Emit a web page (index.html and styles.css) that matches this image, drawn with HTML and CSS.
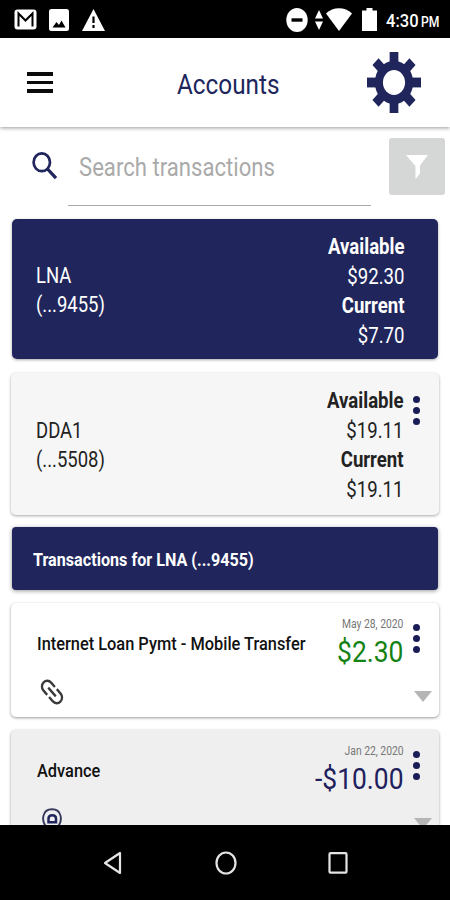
FILE: index.html
```html
<!DOCTYPE html>
<html lang="en">

<head>
  <meta charset="UTF-8">
  <meta name="viewport" content="width=device-width, initial-scale=1.0">
  <title>Accounts</title>

  <link rel="stylesheet" href="styles.css">
</head>

<body>
  <div class="status-bar">
    <svg class="icon-mail" width="23" height="21" viewBox="0 0 23 21">
      <rect x=".5" y=".5" width="22" height="20" rx="3" fill="#fff" />
      <path d="M4.500 17.500V4.500L11.500 11.500L18.500 4.500V17.500" fill="none" stroke="#000" stroke-width="2" />
    </svg>
    <svg class="icon-photo" width="20" height="22" viewBox="0 0 20 22">
      <rect width="20" height="22" rx="2.500" fill="#fff" />
      <path d="M3.500 18.500L7.500 13L10 16L12.500 11.500L16.500 18.500Z" fill="#000" />
    </svg>
    <svg class="icon-warning" width="23" height="22" viewBox="0 0 23 22">
      <path d="M11.500 0L23 22H0Z" fill="#fff" />
      <path d="M11.500 7.500V14M11.500 16V19" stroke="#000" stroke-width="2.200" />
    </svg>
    <svg class="icon-dnd" width="22" height="24" viewBox="0 0 22 24">
      <ellipse cx="11" cy="12" rx="10.700" ry="12" fill="#fff" />
      <path d="M5.500 12H16.500" stroke="#000" stroke-width="3.400" />
    </svg>
    <svg class="icon-data" width="8" height="20" viewBox="0 0 8 20">
      <path d="M4 0L8 8.500H0ZM4 20L8 11.500H0Z" fill="#fff" />
    </svg>
    <svg class="icon-wifi" width="26" height="23" viewBox="0 0 26 23">
      <path d="M0 5.500C7-1.500 19-1.500 26 5.500L13 23Z" fill="#fff" />
    </svg>
    <svg class="icon-battery" width="15" height="23" viewBox="0 0 15 23">
      <path d="M4.500 0H10.500V2.500H15V23H0V2.500H4.500Z" fill="#fff" />
    </svg>
    <div class="clock"><span class="clock-time">4:30</span><span class="clock-pm">PM</span></div>
  </div>

  <header class="header">
    <div class="menu">
      <i></i><i></i><i></i>
    </div>
    <h1 class="title">Accounts</h1>
    <svg class="gear" width="54" height="61" viewBox="-31 -31 62 62" preserveAspectRatio="none">
      <g fill="#20265c">
        <rect x="-5" y="-31" width="10" height="62" />
        <rect x="-31" y="-5" width="62" height="10" />
        <rect x="-5" y="-30" width="10" height="60" transform="rotate(45)" />
        <rect x="-5" y="-30" width="10" height="60" transform="rotate(-45)" />
        <circle r="22" />
      </g>
      <circle r="12.700" fill="#fff" />
    </svg>
  </header>

  <main class="content">
    <div class="search">
      <svg class="icon-search" width="26" height="28" viewBox="0 0 26 28">
        <ellipse cx="9.800" cy="10.300" rx="8.200" ry="8.900" fill="none" stroke="#20265c" stroke-width="2.700" />
        <path d="M15.500 17L24 26.200" stroke="#20265c" stroke-width="3.300" />
      </svg>
      <div class="search-field"><span class="placeholder">Search transactions</span></div>
      <div class="filter">
        <svg width="22" height="24" viewBox="0 0 22 24">
          <path d="M0 0H22L14 10.500V18.500L9.500 24V11Z" fill="#fff" />
        </svg>
      </div>
    </div>

    <section class="account selected">
      <div class="account-name"><span>LNA</span><span>(...9455)</span></div>
      <div class="account-balance">
        <b>Available</b><span>$92.30</span><b>Current</b><span>$7.70</span>
      </div>
    </section>

    <section class="account">
      <div class="account-name"><span>DDA1</span><span>(...5508)</span></div>
      <div class="account-balance">
        <b>Available</b><span>$19.11</span><b>Current</b><span>$19.11</span>
      </div>
      <div class="dots"><i></i><i></i><i></i></div>
    </section>

    <div class="list-title"><span>Transactions for LNA (...9455)</span></div>

    <section class="transaction">
      <div class="desc">
        <span class="desc-text">Internet Loan Pymt - Mobile Transfer</span>
        <svg class="icon-link" width="26" height="28" viewBox="0 0 26 28">
          <g transform="translate(13 14) scale(.93 1) rotate(47)" fill="none" stroke="#3a3a3a" stroke-width="2.500">
            <path d="M-1.500 -5.700H-7.500A5.700 5.700 0 0 0 -7.500 5.700H-1.500M1.500 -5.700H7.500A5.700 5.700 0 0 1 7.500 5.700H1.500M-6 0H6" />
          </g>
        </svg>
      </div>
      <div class="amount">
        <span class="date">May 28, 2020</span>
        <span class="value credit">$2.30</span>
      </div>
      <div class="dots"><i></i><i></i><i></i></div>
      <i class="expand"></i>
    </section>

    <section class="transaction alt">
      <div class="desc">
        <span class="desc-text">Advance</span>
        <svg class="icon-pin" width="20" height="24" viewBox="0 0 20 24">
          <path d="M4.500 19C-1 13 0 1.200 10 1.200S21 13 15.500 19" fill="none" stroke="#35385c" stroke-width="1.900" />
          <path d="M6.500 14.300V10.500C6.500 6 14 6 14 10.500V14.300Z" fill="none" stroke="#20265c" stroke-width="2.500" />
        </svg>
      </div>
      <div class="amount">
        <span class="date">Jan 22, 2020</span>
        <span class="value">-$10.00</span>
      </div>
      <div class="dots"><i></i><i></i><i></i></div>
      <i class="expand"></i>
    </section>
  </main>

  <nav class="nav-bar">
    <svg width="20" height="24" viewBox="0 0 20 24">
      <path d="M17 2V22L2 12Z" fill="none" stroke="#e4e4e4" stroke-width="2.200" stroke-linejoin="round" />
    </svg>
    <svg width="22" height="24" viewBox="0 0 22 24">
      <ellipse cx="11" cy="12" rx="9.500" ry="10.500" fill="none" stroke="#e4e4e4" stroke-width="2.200" />
    </svg>
    <svg width="20" height="24" viewBox="0 0 20 24">
      <rect x="1.500" y="2.200" width="17" height="19.500" rx="1" fill="none" stroke="#e4e4e4" stroke-width="2.200" />
    </svg>
  </nav>
</body>

</html>
```

FILE: styles.css
```css
* {
  box-sizing: border-box;
}

body {
  margin: 0;
  width: 450px;
  height: 900px;
  overflow: hidden;
  display: flex;
  flex-direction: column;
  background-color: #fff;
  color: #222;
  font-family: Roboto, "Liberation Sans", sans-serif;
}

svg {
  display: block;
  flex: none;
}

.status-bar {
  flex: none;
  height: 38px;
  display: flex;
  align-items: center;
  padding: 1px 10px 0 14px;
  background-color: #000;
  color: #fff;
}

.icon-photo {
  margin-left: 12px;
}

.icon-warning {
  margin-left: 13px;
}

.icon-dnd {
  margin-left: auto;
}

.icon-data {
  margin-left: 7px;
}

.icon-wifi {
  margin-left: 3px;
}

.icon-battery {
  margin-left: 10px;
}

.clock {
  width: 54px;
  margin-left: 9px;
  padding-top: 1px;
  display: flex;
  align-items: baseline;
  font-weight: 500;
  white-space: nowrap;
}

.clock-time {
  width: 35px;
  font-size: 19px;
  transform: scaleX(.87);
  transform-origin: left;
}

.clock-pm {
  font-size: 14px;
  transform: scaleX(.87);
  transform-origin: left;
}

.header {
  position: relative;
  flex: none;
  height: 89px;
  display: flex;
  align-items: center;
  padding: 0 29px 0 27px;
  background-color: #fff;
  box-shadow: 0 1px 4px rgba(0, 0, 0, .4);
}

.menu {
  width: 26px;
  display: grid;
  gap: 5px;
}

.menu i {
  height: 3.500px;
  background-color: #0b0b0b;
}

.title {
  width: 120px;
  margin: 5px 0 0 124px;
  color: #20265c;
  font-size: 27px;
  font-weight: 400;
  line-height: 32px;
  transform: scaleX(.9);
  transform-origin: left;
}

.gear {
  margin-left: auto;
}

.content {
  flex: 1;
  min-height: 0;
  overflow: hidden;
  padding: 0 11px;
}

.search {
  height: 92px;
  display: flex;
  padding-left: 21px;
  margin-right: -6px;
}

.icon-search {
  margin-top: 25px;
}

.search-field {
  width: 303px;
  height: 79px;
  margin-left: 10px;
  padding: 26px 0 0 11px;
  border-bottom: 1px solid #aaa;
  color: #aaa;
  font-size: 25px;
  line-height: 30px;
}

.placeholder {
  display: inline-block;
  white-space: nowrap;
  transform: scaleX(.885);
  transform-origin: left;
}

.filter {
  width: 56px;
  height: 57px;
  margin: 11px 0 0 auto;
  display: grid;
  place-items: center;
  border-radius: 3px;
  background-color: #d5d7d7;
}

.account {
  height: 142px;
  display: flex;
  padding: 13px 9px 11px 25px;
  margin-bottom: 12px;
  border-radius: 5px;
  background-color: #f6f6f6;
  box-shadow: 0 1px 3px rgba(0, 0, 0, .35);
  font-size: 22px;
  line-height: 29.500px;
}

.account.selected {
  height: 140px;
  margin: 0 1px 14px;
  padding: 13px 34px 11px 24px;
  background-color: #20265c;
  color: #fff;
}

.account-name {
  display: flex;
  flex-direction: column;
  justify-content: center;
  transform: scaleX(.84);
  transform-origin: left;
}

.account-balance {
  margin-left: auto;
  display: flex;
  flex-direction: column;
  align-items: flex-end;
  transform: scaleX(.845);
  transform-origin: right;
}

.account-balance b {
  font-weight: 700;
}

.dots {
  width: 7px;
  margin: 10px 10.500px 0 9.500px;
  display: flex;
  flex-direction: column;
  gap: 4px;
}

.dots i {
  height: 7px;
  border-radius: 50%;
  background-color: #1a1c56;
}

.list-title {
  height: 63px;
  margin: 0 1px 13px;
  padding: 2px 0 0 21px;
  display: flex;
  align-items: center;
  border-radius: 4px;
  background-color: #20265c;
  box-shadow: 0 1px 4px rgba(0, 0, 0, .4);
  color: #fff;
  font-size: 19px;
  font-weight: 700;
}

.list-title span {
  white-space: nowrap;
  transform: scaleX(.85);
  transform-origin: left;
}

.transaction {
  position: relative;
  height: 114px;
  display: flex;
  margin-bottom: 13px;
  padding: 13px 9px 0 26px;
  border-radius: 5px;
  background-color: #fff;
  box-shadow: 0 1px 3px rgba(0, 0, 0, .4);
}

.transaction.alt {
  background-color: #efefef;
}

.desc {
  width: 270px;
  padding-top: 16px;
}

.desc-text {
  display: inline-block;
  color: #111;
  font-size: 18px;
  font-weight: 500;
  line-height: 24px;
  white-space: nowrap;
  transform: scaleX(.91);
  transform-origin: left;
}

.icon-link {
  margin: 22px 0 0 2px;
}

.icon-pin {
  margin: 25px 0 0 5px;
}

.amount {
  flex: 1;
  display: flex;
  flex-direction: column;
  align-items: flex-end;
  white-space: nowrap;
}

.date {
  color: #777;
  font-size: 12px;
  line-height: 16px;
  transform: scaleX(.86);
  transform-origin: right;
}

.value {
  margin-top: 2px;
  color: #20205c;
  font-size: 30px;
  line-height: 36px;
  transform: scaleX(.88);
  transform-origin: right;
}

.value.credit {
  color: #148214;
}

.transaction .dots {
  margin-top: 8px;
}

/* dropdown arrow in the card's corner */
.expand {
  position: absolute;
  right: 7px;
  bottom: 15px;
  border: 9px solid transparent;
  border-top: 11px solid #b5b5b5;
  border-bottom: 0;
}

.nav-bar {
  position: relative;
  flex: none;
  height: 75px;
  display: flex;
  justify-content: space-between;
  align-items: center;
  padding: 0 102px 0 103px;
  background-color: #000;
}
```
